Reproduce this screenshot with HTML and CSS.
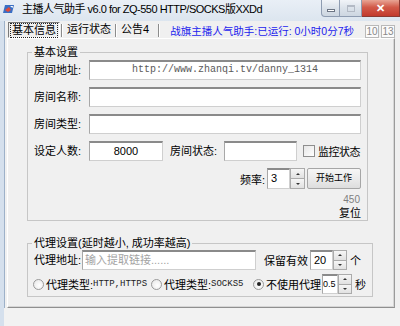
FILE: index.html
```html
<!DOCTYPE html>
<html lang="zh-CN">
<head>
  <meta charset="UTF-8" />
  <title>主播人气助手 v6.0</title>
  <link rel="stylesheet" href="styles.css">
</head>
<body>
  <div class="window">

    <div class="titlebar">
      <svg class="app-icon" width="12" height="10" viewBox="0 0 12 10">
        <path d="M2 1 L11 1 L9 9 L0 9 Z" fill="#3b6fc4"/>
        <path d="M2 6 L6 3 L8 6 L5 8 Z" fill="#e04a3a"/>
        <path d="M7 2 L10 2 L9.5 4 Z" fill="#fff"/>
      </svg>
      <span class="title">主播人气助手 v6.0 for ZQ-550 HTTP/SOCKS版XXDd</span>
      <div class="caption">
        <span class="cbtn min"><i></i></span>
        <span class="cbtn max"><i></i></span>
        <span class="cbtn close">✕</span>
      </div>
    </div>

    <div class="client">
      <div class="tabbar">
        <span class="tab active"><span class="focus">基本信息</span></span>
        <span class="sep"></span>
        <span class="tab">运行状态</span>
        <span class="sep"></span>
        <span class="tab last">公告4</span>
        <span class="sep"></span>
        <span class="runinfo">战旗主播人气助手:已运行: 0小时0分7秒</span>
        <span class="num">10</span>
        <span class="num">13</span>
      </div>

      <div class="panel">
        <fieldset class="group basic">
          <legend>基本设置</legend>
          <div class="row">
            <span class="lbl">房间地址:</span>
            <div class="box url">http://www.zhanqi.tv/danny_1314</div>
          </div>
          <div class="row">
            <span class="lbl">房间名称:</span>
            <div class="box"></div>
          </div>
          <div class="row">
            <span class="lbl">房间类型:</span>
            <div class="box"></div>
          </div>
          <div class="row">
            <span class="lbl">设定人数:</span>
            <div class="box count">8000</div>
            <span class="lbl state">房间状态:</span>
            <div class="box state-box"></div>
            <span class="chk"></span>
            <span class="chk-text">监控状态</span>
          </div>
          <div class="row freq">
            <span class="lbl-short">频率:</span>
            <div class="box spin-val">3</div>
            <div class="spin"><span><i class="up"></i></span><span><i class="down"></i></span></div>
            <span class="btn">开始工作</span>
          </div>
          <div class="counter">450</div>
          <div class="reset">复位</div>
        </fieldset>

        <fieldset class="group proxy">
          <legend>代理设置(延时越小, 成功率越高)</legend>
          <div class="row">
            <span class="lbl proxy-lbl">代理地址:</span>
            <div class="box proxy-box placeholder">输入提取链接......</div>
            <span class="keep">保留有效</span>
            <div class="box spin-val">20</div>
            <div class="spin narrow"><span><i class="up"></i></span><span><i class="down"></i></span></div>
            <span class="unit">个</span>
          </div>
          <div class="radios">
            <span class="opt opt1"><span class="radio"></span>代理类型:<span class="mono">HTTP,HTTPS</span></span>
            <span class="opt opt2"><span class="radio"></span>代理类型:<span class="mono">SOCKS5</span></span>
            <span class="opt opt3"><span class="radio on"></span>不使用代理</span>
            <div class="box spin-val tiny">0.5</div>
            <div class="spin narrow short"><span><i class="up"></i></span><span><i class="down"></i></span></div>
            <span class="unit">秒</span>
          </div>
        </fieldset>
      </div>

      <div class="statusbar"></div>
    </div>

  </div>
</body>
</html>
```

FILE: styles.css
```css
* {
  box-sizing: border-box;
}
body {
  margin: 0;
  width: 400px;
  height: 326px;
  overflow: hidden;
  font-family: "Liberation Sans", "Noto Sans CJK SC", sans-serif;
  font-size: 11px;
  color: #000;
  background: #f0f0f0;
}
.window {
  display: flex;
  flex-direction: column;
  height: 326px;
}

/* title bar */
.titlebar {
  height: 21px;
  flex: 0 0 21px;
  display: flex;
  align-items: flex-start;
  background: linear-gradient(#e9eff6, #dce5ef);
}
.app-icon {
  margin: 4px 0 0 3px;
}
.title {
  margin-left: 7px;
  line-height: 18px;
  font-size: 11px;
  letter-spacing: -0.5px;
  white-space: nowrap;
}
.caption {
  margin-left: auto;
  display: flex;
}
.cbtn {
  height: 17px;
  border: 1px solid #8e9cb1;
  border-top: none;
  display: flex;
  align-items: center;
  justify-content: center;
  background: linear-gradient(#f1f4f8, #dbe2ea 50%, #cdd6e1);
}
.cbtn.min {
  width: 19px;
  border-radius: 0 0 0 4px;
}
.cbtn.min i {
  width: 8px;
  height: 3px;
  margin-top: 4px;
  border: 1px solid #6c7584;
  background: #fff;
}
.cbtn.max {
  width: 22px;
  border-left: none;
}
.cbtn.max i {
  width: 8px;
  height: 7px;
  border: 1px solid #b3bac5;
  border-top-width: 2px;
}
.cbtn.close {
  width: 38px;
  border-color: #8a3a33;
  border-left: none;
  background: linear-gradient(#e8a595, #d25a49 45%, #c23a2d);
  color: #fff;
  font-size: 11px;
  font-weight: bold;
}

/* client area */
.client {
  flex: 1;
  display: flex;
  flex-direction: column;
  border-left: 4px solid #d5e0ed;
  box-shadow: inset 1px 0 0 #9db1c9;
}
.tabbar {
  height: 17px;
  flex: 0 0 17px;
  display: flex;
  align-items: center;
  padding: 0 5px 0 4px;
  white-space: nowrap;
}
.tab {
  line-height: 13px;
  padding: 0 3px;
}
.tab.active {
  height: 16px;
  margin-top: 1px;
  padding: 1px 2px;
  border: 1px solid;
  border-color: #7a7a7a #fff #fff #7a7a7a;
}
.tab.active .focus {
  display: block;
  padding: 0 1px;
  outline: 1px dotted #222;
  outline-offset: 0;
}
.tab.last {
  padding-right: 8px;
}
.sep {
  width: 2px;
  height: 13px;
  margin: 2px 1px 0;
  border-left: 1px solid #8c8c8c;
  border-right: 1px solid #fff;
}
.runinfo {
  margin-left: auto;
  margin-right: 9px;
  margin-top: 2px;
  font-size: 10.5px;
  color: #1c1cee;
}
.num {
  width: 14px;
  height: 13px;
  margin-top: 4px;
  margin-left: 2px;
  border: 1px solid #b9b9b9;
  background: #fbfbfb;
  color: #8a8a8a;
  font-size: 10px;
  line-height: 11px;
  text-align: center;
}

/* tab panel */
.panel {
  width: 388px;
  height: 270px;
  margin-left: 3px;
  padding: 6px 0 0 19px;
  border: 1px solid;
  border-color: #fff #9b9b9b #8f8f8f #fff;
  box-shadow: inset -1px -1px 0 #d6d6d6;
}
.statusbar {
  flex: 1;
  background: #f2f2f2;
}

/* group boxes */
.group {
  width: 341px;
  margin: 0;
  padding: 1px 6px 0;
  border: 1px solid #c6c6c6;
}
.group legend {
  padding: 0 2px;
  margin-left: -2px;
  line-height: 14px;
  font-size: 11px;
}
.group.proxy {
  margin-top: 15px;
  padding: 0 6px 5px;
}

.row {
  display: flex;
  align-items: center;
  height: 20px;
  margin-bottom: 7px;
  white-space: nowrap;
}
.lbl {
  flex: 0 0 55px;
  line-height: 14px;
}
.box {
  height: 20px;
  flex: 1;
  background: #fff;
  border: 1px solid #cfcfcf;
  border-top: 2px solid #8a8a8a;
  border-left-color: #a8a8a8;
  line-height: 16px;
  overflow: hidden;
  white-space: nowrap;
}
.box.url {
  text-align: center;
  font-family: "Liberation Mono", monospace;
  font-size: 10px;
  color: #5a5a5a;
}
.box.count {
  flex: 0 0 74px;
  text-align: center;
  font-size: 11px;
}
.lbl.state {
  flex: 0 0 54px;
  margin-left: 7px;
}
.box.state-box {
  flex: 0 0 73px;
}
.chk {
  flex: 0 0 12px;
  height: 12px;
  margin-left: 6px;
  border: 1px solid #8e8e8e;
  background: linear-gradient(135deg, #e6e6e6, #fff);
}
.chk-text {
  margin-left: 3px;
  flex-shrink: 0;
  letter-spacing: -0.5px;
}

.row.freq {
  height: 21px;
  margin-bottom: 0;
  justify-content: flex-end;
}
.lbl-short {
  flex: 0 0 auto;
  margin-right: 2px;
}
.box.spin-val {
  flex: 0 0 23px;
  height: 100%;
  padding-left: 3px;
}
.spin {
  flex: 0 0 15px;
  height: 100%;
  display: flex;
  flex-direction: column;
}
.spin span {
  flex: 1;
  display: flex;
  align-items: center;
  justify-content: center;
  border: 1px solid #ababab;
  background: linear-gradient(#f6f6f6, #e1e1e1);
}
.spin span + span {
  border-top: none;
}
.spin i {
  width: 0;
  height: 0;
  border-left: 2px solid transparent;
  border-right: 2px solid transparent;
}
.spin i.up {
  border-bottom: 2px solid #333;
}
.spin i.down {
  border-top: 2px solid #333;
}
.spin.narrow {
  flex-basis: 14px;
}
.btn {
  flex: 0 0 54px;
  height: 21px;
  margin-left: 2px;
  border: 1px solid #a6a6a6;
  border-radius: 2px;
  background: linear-gradient(#f6f6f6, #ebebeb 50%, #dddddd);
  font-size: 9px;
  line-height: 19px;
  text-align: center;
}
.counter {
  margin-top: 4px;
  height: 13px;
  line-height: 13px;
  text-align: right;
  color: #7f7f7f;
  font-size: 10px;
  padding-right: 1px;
}
.reset {
  height: 14px;
  line-height: 14px;
  text-align: right;
}

/* proxy group */
.lbl.proxy-lbl {
  flex: 0 0 48px;
}
.box.proxy-box {
  flex: 0 0 174px;
  padding-left: 2px;
}
.placeholder {
  color: #a3a3a3;
}
.keep {
  margin-left: 8px;
  width: 46px;
}
.unit {
  margin-left: 3px;
}
.radios {
  display: flex;
  align-items: center;
  height: 14px;
  margin: 6px 0 0 -1px;
  white-space: nowrap;
}
.opt {
  display: flex;
  align-items: center;
  flex-shrink: 0;
}
.opt1 {
  width: 118px;
}
.opt2 {
  width: 102px;
}
.opt3 {
  width: 69px;
}
.radio {
  width: 11px;
  height: 11px;
  margin-right: 2px;
  border: 1px solid #9a9a9a;
  border-radius: 50%;
  background: radial-gradient(circle at 60% 60%, #fff, #e4e4e4);
  display: flex;
  align-items: center;
  justify-content: center;
}
.radio.on::after {
  content: "";
  width: 4px;
  height: 4px;
  border-radius: 50%;
  background: #222;
}
.mono {
  font-family: "Liberation Mono", monospace;
  font-size: 9px;
  color: #222;
}
.box.spin-val.tiny {
  flex: 0 0 16px;
  height: 20px;
  padding-left: 0;
  font-size: 9px;
}
.spin.short {
  height: 20px;
}
```
